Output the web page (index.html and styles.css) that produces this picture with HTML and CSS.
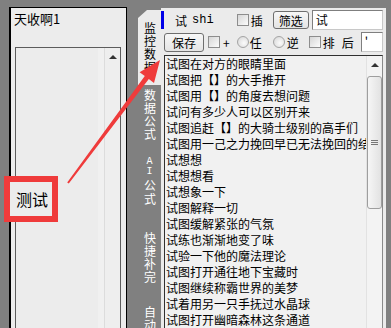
FILE: index.html
```html
<!DOCTYPE html>
<html lang="zh-CN">
<head>
    <meta charset="UTF-8">
    <title>监控数据</title>
    <link rel="stylesheet" href="styles.css">
</head>
<body>
    <div class="desk">
        <!-- left window -->
        <div class="win-left">
            <div class="title">天收啊1</div>
            <div class="lb">
                <div class="lb-body"></div>
                <div class="vscroll">
                    <div class="sb-btn"><span class="tri"></span></div>
                </div>
            </div>
        </div>

        <!-- right window -->
        <div class="win-right">
            <div class="tabs">
                <div class="tab active t1"><span class="vt">监控数据</span></div>
                <div class="tab t2"><span class="vt">数据公式</span></div>
                <div class="tab t3"><span class="lat">A</span><span class="lat">I</span><span class="vt">公式</span></div>
                <div class="tab t4"><span class="vt">快捷补完</span></div>
                <div class="tab t5"><span class="vt">自动</span></div>
            </div>
            <div class="content">
                <div class="row r1">
                    <span class="flag"></span>
                    <span class="sym">试</span>
                    <span class="pin">shi</span>
                    <span class="chk m-ins"></span>
                    <span class="lbl">插</span>
                    <span class="btn btn-filter">筛选</span>
                    <span class="field f-wide">试</span>
                </div>
                <div class="row r2">
                    <span class="btn btn-save">保存</span>
                    <span class="chk m-plus"></span>
                    <span class="lbl l-plus">+</span>
                    <span class="radio m-any"></span>
                    <span class="lbl l-tight">任</span>
                    <span class="radio m-rev"></span>
                    <span class="lbl">逆</span>
                    <span class="chk m-sort"></span>
                    <span class="lbl">排</span>
                    <span class="lbl l-after">后</span>
                    <span class="field f-small">'</span>
                </div>
                <div class="list">
                    <ul class="items">
                        <li>试图在对方的眼睛里面</li>
                        <li>试图把【】的大手推开</li>
                        <li>试图用【】的角度去想问题</li>
                        <li>试问有多少人可以区别开来</li>
                        <li>试图追赶【】的大骑士级别的高手们</li>
                        <li>试图用一己之力挽回早已无法挽回的结局</li>
                        <li>试想想</li>
                        <li>试想想看</li>
                        <li>试想象一下</li>
                        <li>试图解释一切</li>
                        <li>试图缓解紧张的气氛</li>
                        <li>试练也渐渐地变了味</li>
                        <li>试验一下他的魔法理论</li>
                        <li>试图打开通往地下宝藏时</li>
                        <li>试图继续称霸世界的美梦</li>
                        <li>试着用另一只手抚过水晶球</li>
                        <li>试图打开幽暗森林这条通道</li>
                    </ul>
                    <div class="vscroll vs-right">
                        <div class="sb-btn"><span class="tri"></span></div>
                        <div class="thumb"><span class="grip"></span></div>
                    </div>
                </div>
            </div>
        </div>

        <!-- annotation -->
        <div class="mark">测试</div>
        <svg class="pointer" width="391" height="328" viewBox="0 0 391 328">
            <polygon points="67.2,182.4 144.8,76.1 139.6,72.2 160,60 154,83 148.8,79.1 68.8,183.6" fill="#ef3b3b"/>
        </svg>
    </div>
</body>
</html>
```

FILE: styles.css
```css
* {
    box-sizing: border-box;
}
body {
    margin: 0;
    background: #808080;
    font-family: "Noto Sans CJK SC", sans-serif;
    font-size: 12px;
    color: #000;
    height: 328px;
    overflow: hidden;
}
.desk {
    position: relative;
    display: flex;
    align-items: flex-start;
    height: 328px;
    padding-top: 7px;
}

/* left window */
.win-left {
    margin-left: 9px;
    width: 118px;
    height: 321px;
    border: 1px solid #000;
    border-left-width: 2px;
    border-bottom: none;
    background: #ececec;
    padding: 3px 5px 0 4px;
    display: flex;
    flex-direction: column;
}
.title {
    font-size: 13px;
    line-height: 16px;
    margin-left: -1px;
}
.lb {
    margin-top: 20px;
    flex: 1;
    display: flex;
    border: 1px solid #5c5c5c;
    border-bottom: none;
}
.lb-body {
    flex: 1;
    border-right: 6px solid #f0f0f0;
}
.vscroll {
    width: 16px;
    background: #eeeeee;
    border-left: 1px solid #dcdcdc;
}
.sb-btn {
    height: 18px;
    display: flex;
    align-items: center;
    justify-content: center;
}
.tri {
    width: 0;
    height: 0;
    border-left: 4px solid transparent;
    border-right: 4px solid transparent;
    border-bottom: 4px solid #333;
}

/* right window */
.win-right {
    margin-left: 11px;
    display: flex;
    align-items: flex-start;
}
.tabs {
    width: 23px;
    margin-top: 3px;
    display: flex;
    flex-direction: column;
}
.tab {
    color: #fff;
    padding-top: 4px;
    display: flex;
    flex-direction: column;
    align-items: center;
    overflow: hidden;
}
.vt {
    writing-mode: vertical-rl;
    text-orientation: upright;
    letter-spacing: 1px;
    line-height: 16px;
}
.lat {
    font-family: "Liberation Mono", monospace;
    font-size: 10px;
    line-height: 10px;
    height: 10px;
}
.t3 .vt {
    margin-top: 2px;
    letter-spacing: 2px;
}
.tab.active {
    background: #ebebeb;
    color: #000;
    clip-path: polygon(0 8px, 9px 0, 100% 0, 100% 100%, 0 100%);
}
.t1 { height: 75px; padding-top: 12px; }
.t2 { height: 68px; }
.t3 { height: 75px; }
.t4 { height: 74px; }
.t5 { height: 40px; }

.content {
    width: 225px;
    height: 320px;
    margin-top: 1px;
    background: #ebebeb;
    display: flex;
    flex-direction: column;
}
.row {
    display: flex;
    align-items: center;
    height: 20px;
    margin-top: 2px;
}
.r2 {
    margin-left: 3px;
}
.flag {
    width: 3px;
    height: 18px;
    background: #0000e8;
}
.sym {
    margin-left: 11px;
}
.pin {
    margin-left: 5px;
    font-family: "Liberation Mono", monospace;
}
.chk {
    width: 12px;
    height: 12px;
    border: 1px solid #8d8d8d;
    background: linear-gradient(135deg, #d6d6d6, #fcfcfc);
}
.radio {
    width: 12px;
    height: 12px;
    border-radius: 50%;
    border: 1px solid #a4a4a4;
    background: radial-gradient(circle at 60% 60%, #fbfbfb, #d4d4d4);
}
.lbl {
    margin-left: 2px;
}
.l-plus { margin-left: 3px; }
.l-tight { margin-left: 1px; }
.l-after { margin-left: 7px; }
.m-ins { margin-left: 23px; }
.m-plus { margin-left: 4px; }
.m-any { margin-left: 7px; }
.m-rev { margin-left: 11px; }
.m-sort { margin-left: 10px; }
.btn {
    display: flex;
    align-items: center;
    justify-content: center;
    border: 1px solid #6e6e6e;
    border-radius: 3px;
    background: linear-gradient(#f7f7f7, #e4e4e4);
}
.btn-filter {
    margin-left: 10px;
    width: 36px;
    height: 18px;
}
.btn-save {
    width: 40px;
    height: 19px;
}
.field {
    height: 20px;
    background: #fff;
    border: 1px solid #7f7f7f;
    border-right-color: #c8c8c8;
    border-bottom-color: #c8c8c8;
    padding-left: 3px;
    line-height: 18px;
}
.f-wide {
    margin-left: 3px;
    width: 71px;
}
.f-small {
    margin-left: 7px;
    width: 22px;
}

.list {
    margin: 3px 0 0 3px;
    width: 219px;
    flex: 1;
    display: flex;
    background: #f1f1f1;
    border: 1px solid #8a8a8a;
    border-top-color: #303030;
    border-left-color: #303030;
    border-bottom: none;
}
.items {
    flex: 1;
    list-style: none;
    margin: 0;
    padding: 0 0 0 1px;
    overflow: hidden;
}
.items li {
    height: 16px;
    line-height: 16px;
    white-space: nowrap;
}
.vs-right {
    width: 16px;
    background: #f3f3f3;
    border-left: 1px solid #e2e2e2;
}
.thumb {
    margin-top: 2px;
    height: 133px;
    border: 1px solid #9e9e9e;
    border-radius: 3px;
    background: linear-gradient(90deg, #f6f6f6, #e2e2e2);
    display: flex;
    align-items: center;
    justify-content: center;
}
.grip {
    width: 7px;
    height: 5px;
    border-top: 1px solid #777;
    border-bottom: 1px solid #777;
    background: linear-gradient(transparent 1px, #777 1px, #777 2px, transparent 2px);
}

/* annotation */
.mark {
    position: absolute;
    left: 4px;
    top: 176px;
    width: 54px;
    height: 46px;
    border: 6px solid #ef3b3b;
    background: #ececec;
    font-size: 16px;
    line-height: 34px;
    padding-left: 6px;
}
.pointer {
    position: absolute;
    left: 0;
    top: 0;
    pointer-events: none;
}
```
